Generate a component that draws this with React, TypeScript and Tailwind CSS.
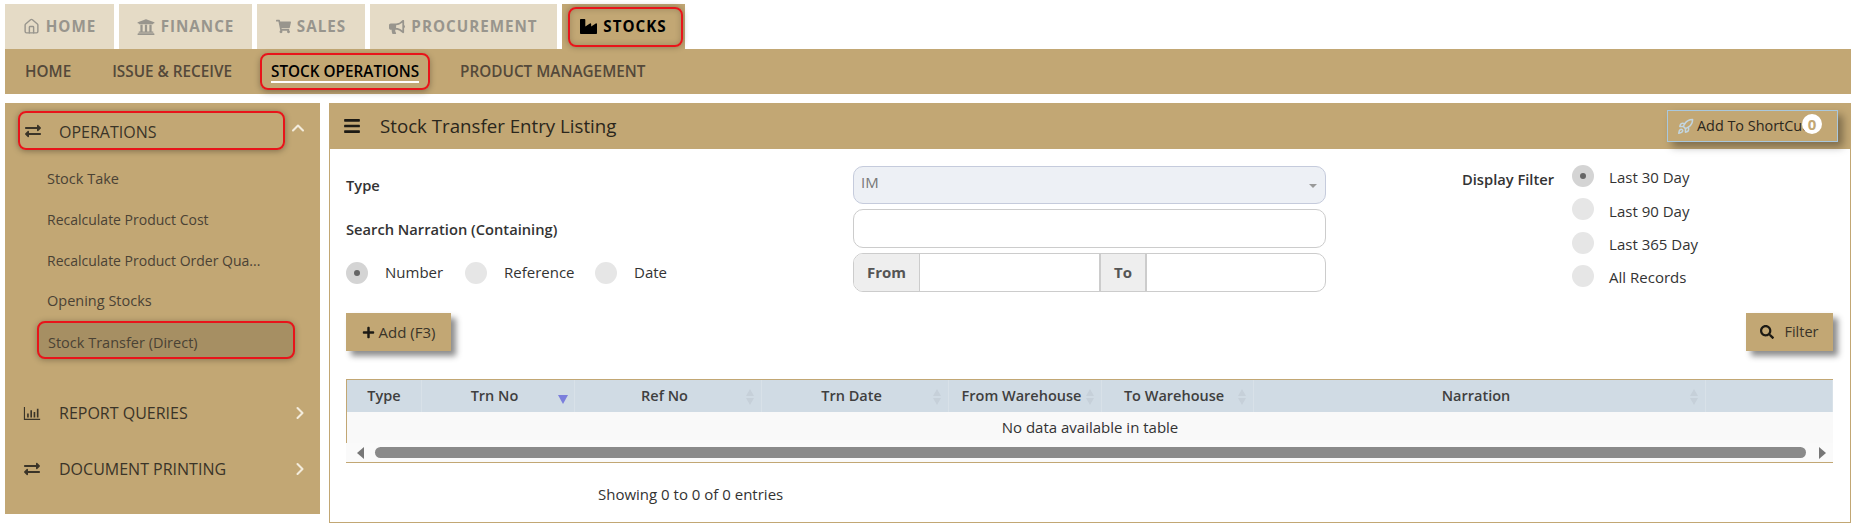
import { FaBullhorn, FaExchangeAlt, FaBars, FaIndustry, FaPlus, FaSearch, FaShoppingCart, FaUniversity } from 'react-icons/fa'
import { LuChevronRight, LuChevronUp, LuHouse, LuRocket } from 'react-icons/lu'

const tan = 'bg-[#c2a774]'

function BarChartIcon({ className }: { className?: string }) {
  return (
    <svg viewBox="0 0 20 16" className={className} fill="currentColor">
      <path d="M0 0h1.4v14.4H20V16H0z" />
      <path d="M4 8h2v5H4zM8 4h2v9H8zM12 6h2v7h-2zM16 2h2v11h-2z" />
    </svg>
  )
}

function Sort({ active }: { active?: boolean }) {
  if (active) {
    return <span className="absolute right-[6px] top-[15px] h-0 w-0 border-x-[5px] border-t-[9px] border-x-transparent border-t-[#7b7fdc]" />
  }
  return (
    <span className="absolute right-[7px] top-[9px] flex flex-col gap-[2px]">
      <span className="h-0 w-0 border-x-[4px] border-b-[7px] border-x-transparent border-b-[#c6d0d9]" />
      <span className="h-0 w-0 border-x-[4px] border-t-[7px] border-x-transparent border-t-[#c6d0d9]" />
    </span>
  )
}

function Radio({ checked }: { checked?: boolean }) {
  return (
    <span className={`flex h-[22px] w-[22px] shrink-0 items-center justify-center rounded-full ${checked ? 'bg-[#d4d4d4]' : 'bg-[#e6e6e6]'}`}>
      {checked && <span className="h-[6px] w-[6px] rounded-full bg-[#666]" />}
    </span>
  )
}

const tabs = [
  { label: 'HOME', icon: <LuHouse className="h-[17px] w-[17px]" />, w: 'w-[109px]' },
  { label: 'FINANCE', icon: <FaUniversity className="h-[18px] w-[18px]" />, w: 'w-[133px]' },
  { label: 'SALES', icon: <FaShoppingCart className="h-[15px] w-[15px]" />, w: 'w-[108px]' },
  { label: 'PROCUREMENT', icon: <FaBullhorn className="h-[16px] w-[16px]" />, w: 'w-[187px]' },
]

const columns = [
  { label: 'Type', w: 'w-[75px]' },
  { label: 'Trn No', w: 'w-[153px] pr-[7px]', sort: 'active' },
  { label: 'Ref No', w: 'w-[187px] pr-[7px]', sort: 'idle' },
  { label: 'Trn Date', w: 'w-[187px] pr-[7px]', sort: 'idle' },
  { label: 'From Warehouse', w: 'w-[153px] pr-[7px]', sort: 'idle' },
  { label: 'To Warehouse', w: 'w-[152px] pr-[7px]', sort: 'idle' },
  { label: 'Narration', w: 'w-[452px] pr-[7px]', sort: 'idle' },
  { label: '', w: 'flex-1' },
]

export default function App() {
  return (
    <div className="h-[526px] w-[1856px] overflow-hidden bg-white pl-[5px] pr-[5px] pt-[4px] font-['Open_Sans',sans-serif] text-[15px] text-[#333]">
      <div className="flex h-[45px] gap-[5px]">
        {tabs.map((t) => (
          <div key={t.label} className={`flex items-center justify-center gap-[6px] bg-[#e5dbc6] text-[15.2px] font-bold tracking-[1px] text-[#98958d] ${t.w}`}>
            {t.icon}
            {t.label}
          </div>
        ))}
        <div className={`flex w-[123px] items-center justify-end pr-[2px] ${tan}`}>
          <div className="flex h-[40px] w-[115px] items-center justify-center gap-[6px] rounded-lg border-2 border-[#e8141a] pr-[4px] text-[15.2px] font-bold tracking-[1px] text-black shadow-[0_0_6px_rgba(0,0,0,0.3),inset_0_0_6px_rgba(0,0,0,0.2)]">
            <FaIndustry className="h-[17px] w-[17px]" />
            STOCKS
          </div>
        </div>
      </div>

      <nav className={`flex h-[45px] items-center text-[15.3px] font-semibold text-[#54493a] ${tan}`}>
        <span className="ml-[20px]">HOME</span>
        <span className="ml-[41px]">ISSUE &amp; RECEIVE</span>
        <div className="ml-[28px] flex h-[37px] w-[170px] items-center justify-center rounded-lg border-2 border-[#e8141a] text-black shadow-[0_2px_6px_rgba(0,0,0,0.3)]">
          <span className="border-b-2 border-white leading-[20px]">STOCK OPERATIONS</span>
        </div>
        <span className="ml-[30px]">PRODUCT MANAGEMENT</span>
      </nav>

      <div className="mt-[9px] flex gap-[9px]">
        <aside className={`h-[411px] w-[315px] shrink-0 text-[14.5px] text-[#4a4234] ${tan}`}>
          <div className="ml-[13px] mt-[8px] flex items-center">
            <div className="flex h-[39px] w-[267px] items-center rounded-lg border-2 border-[#e8141a] text-[16px] text-[#3a3428] shadow-[0_1px_6px_rgba(0,0,0,0.35)]">
              <FaExchangeAlt className="ml-[5px] h-[16px] w-[16px]" />
              <span className="ml-[18px] mt-[3px]">OPERATIONS</span>
            </div>
            <LuChevronUp strokeWidth={2.5} className="ml-[3px] h-[20px] w-[20px] -translate-y-[3px] text-[#f3ecdc]" />
          </div>
          <ul className="mt-[8px] flex flex-col">
            <li className="flex h-[41px] items-center pl-[42px]">Stock Take</li>
            <li className="flex h-[41px] items-center pl-[42px] text-[14px]">Recalculate Product Cost</li>
            <li className="flex h-[41px] items-center pl-[42px] text-[14px]">Recalculate Product Order Qua...</li>
            <li className="flex h-[39px] items-center pl-[42px]">Opening Stocks</li>
            <li className="ml-[32px] mr-[25px] mt-[1px] flex h-[38px] items-center rounded-lg border-2 border-[#e8141a] bg-[#a68f63] pl-[9px] pt-[5px] shadow-[0_1px_6px_rgba(0,0,0,0.3)]">Stock Transfer (Direct)</li>
          </ul>
          <div className="ml-[18px] mt-[34px] flex h-[40px] items-center text-[16px] text-[#3a3428]">
            <BarChartIcon className="h-[13px] w-[18px]" />
            <span className="ml-[18px] flex-1">REPORT QUERIES</span>
            <LuChevronRight strokeWidth={2.5} className="mr-[10px] h-[20px] w-[20px] text-[#f3ecdc]" />
          </div>
          <div className="ml-[18px] mt-[16px] flex h-[40px] items-center text-[16px] text-[#3a3428]">
            <FaExchangeAlt className="ml-[1px] h-[16px] w-[16px]" />
            <span className="ml-[19px] flex-1">DOCUMENT PRINTING</span>
            <LuChevronRight strokeWidth={2.5} className="mr-[10px] h-[20px] w-[20px] text-[#f3ecdc]" />
          </div>
        </aside>

        <main className="h-[420px] flex-1 border border-t-0 border-[#c2a774]">
          <header className={`-mx-px flex h-[46px] items-center pl-[14px] pr-[13px] ${tan}`}>
            <FaBars className="h-[18px] w-[18px] text-[#1c1a14]" />
            <h1 className="ml-[19px] flex-1 text-[18.7px] text-[#2a261c]">Stock Transfer Entry Listing</h1>
            <div className="relative flex h-[32px] w-[171px] items-center border border-[#a9c8de] pl-[9px] text-[14.4px] text-[#2a261c] shadow-[5px_5px_8px_rgba(0,0,0,0.35)]">
              <LuRocket strokeWidth={2.2} className="h-[17px] w-[17px] text-[#c3d6e0]" />
              <span className="ml-[3px] whitespace-nowrap">Add To ShortCut</span>
              <span className="absolute left-[134px] top-[3px] flex h-[20px] w-[20px] items-center justify-center rounded-full bg-white text-[15px] font-bold text-[#c2a774]">0</span>
            </div>
          </header>

          <div className="flex pl-[16px] pr-[17px] pt-[17px]">
            <div className="w-[507px] text-[14.7px] font-semibold">
              <div className="flex h-[38px] items-center pt-[1px]">Type</div>
              <div className="mt-[5px] flex h-[39px] items-center pt-[1px]">Search Narration (Containing)</div>
              <div className="mt-[5px] flex h-[39px] items-center gap-[17px] pt-[1px] text-[15px] font-normal">
                <Radio checked />
                <span className="-mt-[1px] w-[63px] font-medium">Number</span>
                <Radio />
                <span className="-mt-[1px] w-[74px] font-medium">Reference</span>
                <Radio />
                <span className="-mt-[1px] font-medium">Date</span>
              </div>
            </div>

            <div className="w-[473px]">
              <div className="relative flex h-[38px] items-center rounded-[10px] border border-[#c5cbdc] bg-[#edf0f5] pl-[7px] text-[#777]">
                <span className="-mt-[6px]">IM</span>
                <span className="absolute right-[8px] top-[17px] h-0 w-0 border-x-[4px] border-t-[4px] border-x-transparent border-t-[#999]" />
              </div>
              <div className="mt-[5px] h-[39px] rounded-[10px] border border-[#ccc]" />
              <div className="mt-[5px] flex h-[39px] overflow-hidden rounded-[10px] border border-[#ccc]">
                <span className="flex w-[66px] items-center justify-center border-r border-[#ccc] bg-[#eee] font-bold text-[#555]">From</span>
                <span className="w-[179px]" />
                <span className="flex w-[48px] items-center justify-center border-x-2 border-[#ccc] bg-[#eee] font-bold text-[#555]">To</span>
              </div>
            </div>

            <div className="ml-[136px] flex flex-1">
              <span className="mt-[2px] text-[14.7px] font-semibold">Display Filter</span>
              <ul className="-mt-px ml-[18px] flex flex-col gap-[11.4px]">
                {['Last 30 Day', 'Last 90 Day', 'Last 365 Day', 'All Records'].map((label, i) => (
                  <li key={label} className="flex h-[22px] items-center gap-[15px]">
                    <Radio checked={i === 0} />
                    <span className="mt-[3px]">{label}</span>
                  </li>
                ))}
              </ul>
            </div>
          </div>

          <div className="mt-[21px] flex justify-between pl-[16px] pr-[17px]">
            <button className={`flex h-[38px] w-[105px] items-center justify-center gap-[4px] text-[#3a3428] shadow-[5px_5px_6px_rgba(0,0,0,0.45)] ${tan}`}>
              <FaPlus className="h-[13px] w-[13px] text-[#1c1a14]" />
              Add (F3)
            </button>
            <button className={`flex h-[38px] w-[87px] items-center justify-center gap-[10px] text-[14.5px] text-[#3a3428] shadow-[5px_5px_6px_rgba(0,0,0,0.45)] ${tan}`}>
              <FaSearch className="h-[14px] w-[14px] text-[#1c1a14]" />
              Filter
            </button>
          </div>

          <div className="ml-[16px] mr-[17px] mt-[28px] border-y border-[#c2a774]">
            <div className="flex h-[32px] border-l border-[#c2a774] bg-[#d0dbe4] text-[14.5px] font-semibold text-[#3f3f3f]">
              {columns.map((c, i) => (
                <div key={i} className={`relative flex items-center justify-center border-r border-[#d8e1e8] ${c.w}`}>
                  {c.label}
                  {c.sort && <Sort active={c.sort === 'active'} />}
                </div>
              ))}
            </div>
            <div className="flex h-[31px] items-center justify-center border-l border-[#c2a774] bg-[#f9f9f9]">No data available in table</div>
            <div className="flex h-[19px] items-center bg-[#fafafa] pl-[11px] pr-[7px]">
              <span className="h-0 w-0 border-y-[6px] border-r-[7px] border-y-transparent border-r-[#777]" />
              <span className="mx-[11px] h-[11px] flex-1 rounded-full bg-[#8a8a8a]" />
              <span className="ml-[2px] h-0 w-0 border-y-[6px] border-l-[7px] border-y-transparent border-l-[#777]" />
            </div>
          </div>

          <p className="ml-[268px] mt-[20px]">Showing 0 to 0 of 0 entries</p>
        </main>
      </div>
    </div>
  )
}
